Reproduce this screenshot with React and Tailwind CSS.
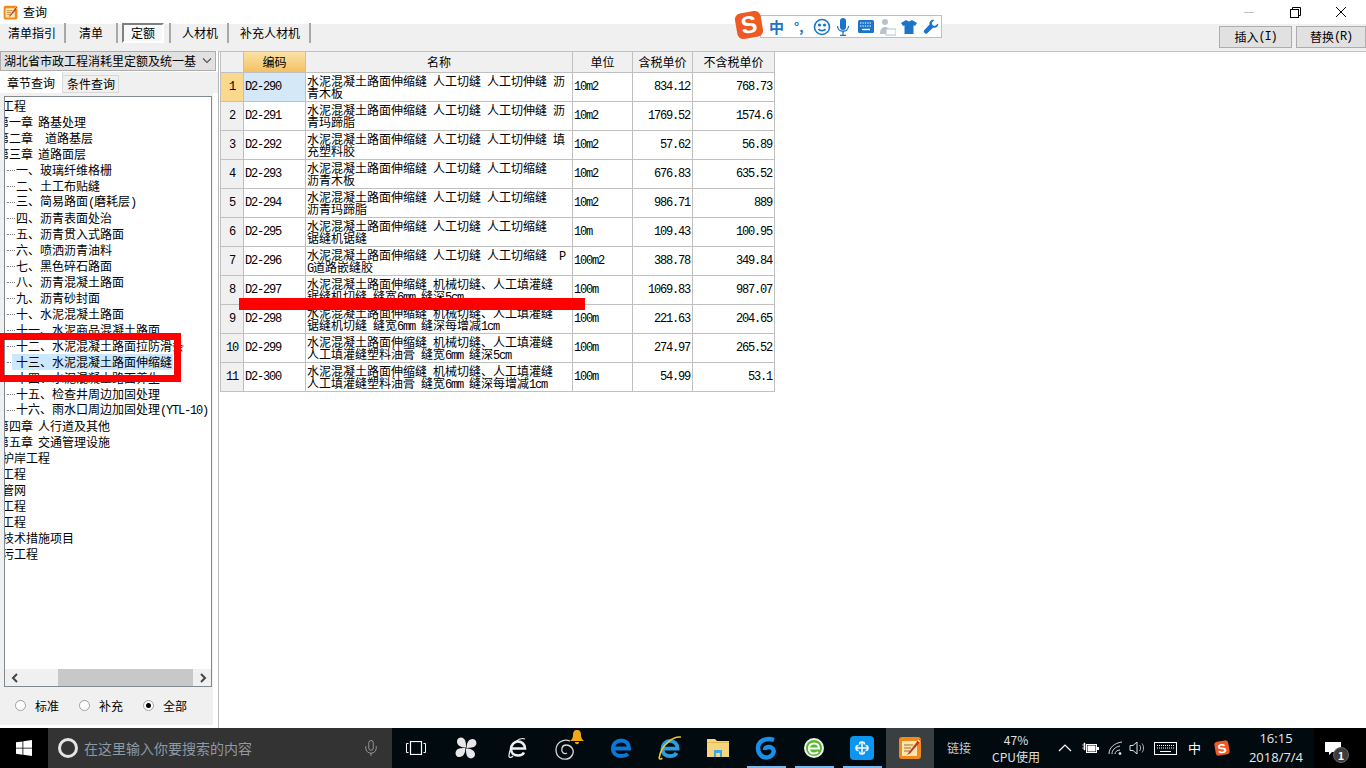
import React from "react";
import { Mic } from "lucide-react";

const CJK = "font-['Noto_Sans_CJK_SC','Noto_Sans',sans-serif]";

const tabs = [
  { label: "清单指引", w: "w-[66px]" },
  { label: "清单", w: "w-[52px]" },
  { label: "定额", w: "w-[53px]", active: true },
  { label: "人材机", w: "w-[58px] pl-[2px]" },
  { label: "补充人材机", w: "w-[82px] pl-[2px]" },
];

const tree = [
  { level: 0, text: "工程" },
  { level: 1, text: "第一章", rest: "路基处理" },
  { level: 1, text: "第二章", rest: "道路基层", wide: true },
  { level: 1, text: "第三章", rest: "道路面层" },
  { level: 2, text: "一、玻璃纤维格栅" },
  { level: 2, text: "二、土工布贴缝" },
  { level: 2, text: "三、简易路面(磨耗层)" },
  { level: 2, text: "四、沥青表面处治" },
  { level: 2, text: "五、沥青贯入式路面" },
  { level: 2, text: "六、喷洒沥青油料" },
  { level: 2, text: "七、黑色碎石路面" },
  { level: 2, text: "八、沥青混凝土路面" },
  { level: 2, text: "九、沥青砂封面" },
  { level: 2, text: "十、水泥混凝土路面" },
  { level: 2, text: "十一、水泥商品混凝土路面" },
  { level: 2, text: "十二、水泥混凝土路面拉防滑条" },
  { level: 2, text: "十三、水泥混凝土路面伸缩缝", selected: true },
  { level: 2, text: "十四、水泥混凝土路面养生" },
  { level: 2, text: "十五、检查井周边加固处理" },
  { level: 2, text: "十六、雨水口周边加固处理(YTL-10)" },
  { level: 1, text: "第四章", rest: "人行道及其他" },
  { level: 1, text: "第五章", rest: "交通管理设施" },
  { level: 0, text: "护岸工程" },
  { level: 0, text: "工程", pad: true },
  { level: 0, text: "管网" },
  { level: 0, text: "工程", pad: true },
  { level: 0, text: "工程", pad: true },
  { level: 0, text: "技术措施项目" },
  { level: 0, text: "污工程" },
];

const HAND = "水泥混凝土路面伸缩缝 人工切缝 人工切伸缝";
const HAND2 = "水泥混凝土路面伸缩缝 人工切缝 人工切缩缝";
const MACH = "水泥混凝土路面伸缩缝 机械切缝、人工填灌缝";

const rows = [
  ["D2-290", [HAND + " 沥", "青木板"], "10m2", "834.12", "768.73"],
  ["D2-291", [HAND + " 沥", "青玛蹄脂"], "10m2", "1769.52", "1574.6"],
  ["D2-292", [HAND + " 填", "充塑料胶"], "10m2", "57.62", "56.89"],
  ["D2-293", [HAND2, "沥青木板"], "10m2", "676.83", "635.52"],
  ["D2-294", [HAND2, "沥青玛蹄脂"], "10m2", "986.71", "889"],
  ["D2-295", [HAND2, "锯缝机锯缝"], "10m", "109.43", "100.95"],
  ["D2-296", [HAND2 + "  P", "G道路嵌缝胶"], "100m2", "388.78", "349.84"],
  ["D2-297", [MACH, "锯缝机切缝 缝宽6mm 缝深5cm"], "100m", "1069.83", "987.07"],
  ["D2-298", [MACH, "锯缝机切缝 缝宽6mm 缝深每增减1cm"], "100m", "221.63", "204.65"],
  ["D2-299", [MACH, "人工填灌缝塑料油膏 缝宽6mm 缝深5cm"], "100m", "274.97", "265.52"],
  ["D2-300", [MACH, "人工填灌缝塑料油膏 缝宽6mm 缝深每增减1cm"], "100m", "54.99", "53.1"],
];

// latin runs are set narrow so they take 6px a char like the original bitmap font
function Mixed({ text }) {
  return (
    <>
      {text.split(/([\x00-\x7f]+)/).map((part, i) =>
        /^[\x00-\x7f]+$/.test(part) ? (
          <span key={i} className="font-['Liberation_Mono',monospace] text-[12px] tracking-[-1.2px] whitespace-pre">
            {part}
          </span>
        ) : (
          <span key={i}>{part}</span>
        )
      )}
    </>
  );
}

function AppIcon({ size = 16 }) {
  return (
    <svg width={size} height={size} viewBox="0 0 24 24">
      <rect x="1" y="1" width="22" height="22" rx="3" fill="#f08a1d" />
      <rect x="4" y="5" width="15" height="15" rx="1" fill="#fbe6b0" />
      <path d="M6 9h9M6 12h7M6 15h6" stroke="#a86a20" strokeWidth="1" />
      <path d="M21 3L11 16l-2 3 3-1.5L23 5z" fill="#c0392b" />
      <path d="M20 4l2 2" stroke="#fff3c0" strokeWidth="1.5" />
    </svg>
  );
}

function TreeRow({ item }) {
  if (item.level === 0) {
    return (
      <div className={item.pad ? "h-4 leading-4 ml-[-15px] whitespace-nowrap" : "h-4 leading-4 ml-[-3px] whitespace-nowrap"}>
        {item.pad && <span className="invisible">市</span>}
        {item.text}
      </div>
    );
  }
  if (item.level === 1) {
    return (
      <div className="h-4 leading-4 ml-[-8px] whitespace-nowrap flex">
        <span>{item.text}</span>
        <span className={item.wide ? "ml-3" : "ml-[5px]"}>{item.rest}</span>
      </div>
    );
  }
  return (
    <div className="h-4 leading-4 flex items-center whitespace-nowrap">
      <span className="w-2 ml-[2px] mr-[1px] border-t border-dotted border-[#808080]" />
      <span className={item.selected ? "bg-[#cce8ff] pl-[4px] ml-[-4px] pr-[1px]" : ""}>
        <Mixed text={item.text} />
      </span>
    </div>
  );
}

function Radio({ label, checked }) {
  return (
    <div className="flex items-center w-16">
      <span className="w-[11px] h-[11px] rounded-full border border-[#a0a0a0] bg-white flex items-center justify-center mr-[9px]">
        {checked && <span className="w-[5px] h-[5px] rounded-full bg-black" />}
      </span>
      <span>{label}</span>
    </div>
  );
}

function LeftPanel() {
  return (
    <div className="w-[219px] shrink-0 flex flex-col border-r border-[#b8b8b8] bg-white">
      <div className="h-[20px] w-[216px] shrink-0 bg-[#e1e1e1] border border-[#adadad] flex items-center justify-between pl-[3px]">
        <span className="whitespace-nowrap">湖北省市政工程消耗里定额及统一基</span>
        <svg width="12" height="8" viewBox="0 0 12 8" fill="none" stroke="#555" strokeWidth="1.2" className="mr-[2px]">
          <path d="M2 1.5l4 4 4-4" />
        </svg>
      </div>
      <div className="h-[21px] mt-[1px] shrink-0 flex items-end bg-[#f0f0f0]">
        <div className="w-[63px] h-[21px] bg-white border-r border-[#d9d9d9] flex items-center justify-center">章节查询</div>
        <div className="w-[56px] h-[18px] pl-[1px] bg-[#f0f0f0] border border-[#d9d9d9] border-l-0 flex items-center justify-center">条件查询</div>
      </div>
      <div className="w-[214px] flex-1 mb-[3px] flex flex-col bg-[#f0f0f0] border-r border-white">
        <div className="h-[591px] mt-[3px] ml-[4px] w-[208px] border border-[#808890] bg-white flex flex-col">
          <div className="flex-1 overflow-hidden pt-[1px]">
            {tree.map((item, i) => (
              <TreeRow key={i} item={item} />
            ))}
          </div>
          <div className="h-[17px] bg-[#f0f0f0] flex items-center">
            <svg width="16" height="12" viewBox="0 0 16 12" fill="none" stroke="#444" strokeWidth="2" className="ml-[2px]">
              <path d="M10 2L6 6l4 4" />
            </svg>
            <div className="ml-[35px] w-[135px] h-full bg-[#c8c8c8]" />
            <svg width="16" height="12" viewBox="0 0 16 12" fill="none" stroke="#444" strokeWidth="2" className="ml-[2px]">
              <path d="M6 2l4 4-4 4" />
            </svg>
          </div>
        </div>
        <div className="h-[37px] flex items-center pl-[15px]">
          <Radio label="标准" />
          <Radio label="补充" />
          <Radio label="全部" checked />
        </div>
      </div>
    </div>
  );
}

const GRID = "grid grid-cols-[23px_62px_267px_60px_60px_82px] w-[554px]";
const HEAD = "flex items-center justify-center border-r border-b border-[#c0c0c0] bg-[#f0f0f0]";
const CELL = "border-r border-b border-[#c0c0c0] flex items-center overflow-hidden whitespace-nowrap";
const NUM = "font-['Liberation_Mono',monospace] text-[12px] tracking-[-1.2px]";

function PriceTable() {
  return (
    <div className="ml-[1px] border-l border-[#c0c0c0]">
      <div className={GRID + " h-[21px]"}>
        <div className={HEAD} />
        <div className="flex items-center justify-center border-r border-b border-[#c0c0c0] bg-gradient-to-b from-[#fbe2a4] to-[#f3c064]">编码</div>
        <div className={HEAD}>名称</div>
        <div className={HEAD}>单位</div>
        <div className={HEAD}>含税单价</div>
        <div className={HEAD}>不含税单价</div>
      </div>
      {rows.map((r, i) => (
        <div key={r[0]} className={GRID + " h-[29px]"}>
          <div className={(i === 0 ? "bg-[#fcd78e] " : "bg-[#f0f0f0] ") + "border-r border-b border-[#c0c0c0] flex items-center justify-center " + NUM}>
            {i + 1}
          </div>
          <div className={CELL + " pl-[1px] " + NUM + (i === 0 ? " bg-[#d5e8f8]" : "")}>{r[0]}</div>
          <div className="border-r border-b border-[#c0c0c0] pl-[1px] flex flex-col justify-center overflow-hidden whitespace-pre leading-[12px]">
            <div className="h-3 shrink-0"><Mixed text={r[1][0]} /></div>
            <div className="h-3 shrink-0"><Mixed text={r[1][1]} /></div>
          </div>
          <div className={CELL + " pl-[1px] " + NUM}>{r[2]}</div>
          <div className={CELL + " justify-end pr-[2px] " + NUM}>{r[3]}</div>
          <div className={CELL + " justify-end pr-[2px] " + NUM}>{r[4]}</div>
        </div>
      ))}
    </div>
  );
}

function SogouBar() {
  return (
    <div className="absolute left-[736px] top-[11px] flex items-center">
      <div className="z-10 w-[26px] h-[26px] rounded-[6px] bg-[#ee5a24] rotate-[-10deg] flex items-center justify-center text-white text-[24px] leading-none font-bold font-['Liberation_Sans',sans-serif]">
        S
      </div>
      <div className="ml-[-2px] mt-[4px] w-[182px] h-[23px] bg-white border border-[#a9c5de] flex items-center text-[#1c74c9]">
        <span className="ml-[8px] w-[20px] font-bold text-[15px] leading-none">中</span>
        <span className="ml-[5px] w-[18px] font-bold text-[13px] leading-none">°,</span>
        <svg width="18" height="18" viewBox="0 0 18 18" fill="none" stroke="#1c74c9" strokeWidth="1.6" className="ml-[1px]">
          <circle cx="9" cy="9" r="7.5" />
          <circle cx="6.5" cy="7" r=".8" fill="#1c74c9" />
          <circle cx="11.5" cy="7" r=".8" fill="#1c74c9" />
          <path d="M5.5 11c1.5 2.2 5.5 2.2 7 0" />
        </svg>
        <svg width="14" height="18" viewBox="0 0 14 18" fill="#1c74c9" className="ml-[5px]">
          <rect x="4" y="0" width="6" height="12" rx="3" />
          <path d="M1.5 8c0 7 11 7 11 0M7 14v3M4 17.3h6" fill="none" stroke="#1c74c9" strokeWidth="1.3" />
        </svg>
        <svg width="16" height="13" viewBox="0 0 16 13" className="ml-[8px]">
          <rect width="16" height="13" rx="1.5" fill="#1c74c9" />
          <path d="M2 3h12M2 6h12" stroke="#fff" strokeWidth="1.2" strokeDasharray="1.4 1" />
          <path d="M4 9.5h8" stroke="#fff" strokeWidth="1.4" />
        </svg>
        <svg width="17" height="18" viewBox="0 0 17 18" fill="#b8c2cc" className="ml-[5px]">
          <circle cx="6" cy="4" r="3" />
          <path d="M1 16c0-5 2-7 5-7s5 2 5 7z" />
          <rect x="7" y="11" width="10" height="6" fill="#fff" stroke="#b8c2cc" />
        </svg>
        <svg width="16" height="16" viewBox="0 0 16 16" fill="#1c74c9" className="ml-[5px]">
          <path d="M5 1l3 1.5L11 1l5 3-2 3-1.5-.8V15H3.500V6.200L2 7 0 4z" />
        </svg>
        <svg width="16" height="16" viewBox="0 0 16 16" fill="#1c74c9" className="ml-[6px]">
          <path d="M15 4.500l-3 2.500-2.500-.8-.8-2.500L11.500 1C9 .2 6 2 6.500 5.500L1 11.500c-1 1.500 1.500 4 3 3l6-5.800c3 .8 6-2 5-4.200z" />
        </svg>
      </div>
    </div>
  );
}

const appIcons = [
  {
    w: "w-[52px]",
    icon: (
      <svg width="24" height="24" viewBox="0 0 20 20" fill="#e8e8e8">
        <path d="M10 9.500C6 9.500 2.500 8 2.500 4.500 2.500 1.500 6 .5 8 2c2 1.500 2 5 2 7.500zM10.500 10C10.500 6 12 2.500 15.500 2.500c3 0 4 3.500 2.500 5.500-1.500 2-5 2-7.500 2zM10 10.500c4 0 7.500 1.500 7.500 5 0 3-3.500 4-5.500 2.500-2-1.500-2-5-2-7.500zM9.500 10C9.500 14 8 17.500 4.500 17.500c-3 0-4-3.500-2.500-5.500 1.500-2 5-2 7.500-2z" />
      </svg>
    ),
  },
  {
    w: "w-[52px]",
    icon: (
      <svg width="24" height="24" viewBox="0 0 24 24" fill="none" stroke="#f0f0f0" strokeWidth="2.6">
        <path d="M5 12.500h14c0-4-3-7-7-7s-7 3.500-7 7.500 3 6.500 7 6.500c3 0 5-1 6-3" />
        <path d="M19 3C14 1 5 6 3 19c-.5 3 2 3 4 1" strokeWidth="1.200" />
      </svg>
    ),
  },
  {
    w: "w-[52px]",
    icon: (
      <div className="relative w-7 h-7">
        <svg width="24" height="24" viewBox="0 0 24 24" fill="none" stroke="#d8d8d8" strokeWidth="1.300" className="absolute left-[-1px] top-[3px]">
          <path d="M15 4C8 1 1 6 1 13s6 10 11 9 8-7 5-11-9-4-10 0 2 7 5 5" />
        </svg>
        <svg width="14" height="15" viewBox="0 0 14 15" fill="#f0a818" className="absolute left-[14px] top-[-4px]">
          <path d="M7 0c3 0 4 2 4 5s1 4 3 6H0c2-2 3-3 3-6s1-5 4-5zM5 12h4c0 3-4 3-4 0z" />
        </svg>
      </div>
    ),
  },
  {
    w: "w-[50px]",
    icon: (
      <svg width="24" height="24" viewBox="0 0 24 24" fill="none" stroke="#0a78d4" strokeWidth="4">
        <path d="M4 12.500h16c0-5-3-8-8-8-4 0-8 3-8 8s4 7.500 8 7.500c3 0 5-.5 7-2" />
      </svg>
    ),
  },
  {
    w: "w-[48px]",
    icon: (
      <svg width="26" height="26" viewBox="0 0 24 24" fill="none">
        <path d="M5 12.500h14c0-4-3-7-7-7s-7 3.500-7 7.500 3 6.500 7 6.500c3 0 5-1 6-3" stroke="#2a9de0" strokeWidth="3.500" />
        <path d="M22 2C16 1 4 8 2 21c0 1.500 1 1.500 3 .5" stroke="#f0c428" strokeWidth="1.500" />
      </svg>
    ),
  },
  {
    w: "w-[48px]",
    icon: (
      <svg width="22" height="20" viewBox="0 0 22 20">
        <path d="M0 1h8l2 2h12v16H0z" fill="#f5d67e" />
        <rect y="4" width="22" height="1" fill="#e6b84c" />
        <rect x="7" y="12" width="8" height="7" fill="#3fa9e8" />
        <rect x="9" y="15" width="4" height="4" fill="#f5d67e" />
      </svg>
    ),
  },
  {
    w: "w-[48px]",
    bar: true,
    icon: (
      <svg width="24" height="26" viewBox="0 0 24 26" fill="none" stroke="#1a8fe8" strokeWidth="4.500">
        <path d="M20 5C12 2 4 6 4 13s6 11 11 9 6-7 3-9-7-1-7 2" />
      </svg>
    ),
  },
  {
    w: "w-[48px]",
    bar: true,
    icon: (
      <svg width="24" height="24" viewBox="0 0 24 24" fill="none">
        <circle cx="12" cy="12" r="10" fill="#f0f0f0" />
        <circle cx="12" cy="12" r="8" fill="#58b92e" />
        <path d="M7 12.500h10c0-3-2-5-5-5s-5 2-5 5 2 5 5 5c2 0 3-.5 4-1.500" stroke="#fff" strokeWidth="2" />
      </svg>
    ),
  },
  {
    w: "w-[48px]",
    bar: true,
    icon: (
      <svg width="24" height="24" viewBox="0 0 24 24" fill="none">
        <rect width="24" height="24" rx="4" fill="#0d96ef" />
        <path d="M12 6v12M7 12h10" stroke="#fff" strokeWidth="1.500" />
        <path d="M9.500 8.500a2.500 2.500 0 0 1 5 0M9.500 15.500a2.500 2.500 0 0 0 5 0M8.500 9.500a2.500 2.500 0 0 0 0 5M15.500 9.500a2.500 2.500 0 0 1 0 5" stroke="#fff" strokeWidth="1.500" />
      </svg>
    ),
  },
];

function Taskbar() {
  return (
    <div className="h-[40px] shrink-0 flex bg-[#000a0f] text-white">
      <div className="w-12 bg-black flex items-center justify-center">
        <svg width="16" height="16" viewBox="0 0 16 16" fill="#fff">
          <path d="M0 2.300l6.500-.9v6.300H0zM7.300 1.300L16 0v7.700H7.300zM0 8.400h6.500v6.300L0 13.800zM7.300 8.400H16V16l-8.700-1.200z" />
        </svg>
      </div>
      <div className="w-[344px] bg-[#333333] flex items-center pl-[10px]">
        <span className="w-[20px] h-[20px] rounded-full border-[3px] border-[#e4e4e4]" />
        <span className="ml-[6px] text-[14px] text-[#8d99a3] whitespace-nowrap">在这里输入你要搜索的内容</span>
        <Mic size={18} strokeWidth={1} className="ml-[110px] text-[#b0b0b0]" />
      </div>
      <div className="w-12 flex items-center justify-center">
        <svg width="20" height="14" viewBox="0 0 20 14" fill="none" stroke="#fff">
          <rect x="4.500" y=".5" width="11" height="13" strokeWidth="1.200" />
          <path d="M2.500 2.500H.5v9h2M17.500 2.500h2v9h-2" />
        </svg>
      </div>
      {appIcons.map((a, i) => (
        <div key={i} className={a.w + " flex items-center justify-center relative"}>
          {a.icon}
          {a.bar && <span className="absolute bottom-0 left-[5px] w-[39px] h-[2px] bg-[#76b9ed]" />}
        </div>
      ))}
      <div className="w-[48px] bg-[#3a3f42] flex items-center justify-center relative">
        <AppIcon size={24} />
      </div>
      <div className="w-[50px] flex items-center justify-center text-[12px] text-[#c8c8c8]">链接</div>
      <div className="w-[64px] flex flex-col items-center justify-center text-[12px] leading-[17px] text-[#e0e0e0]">
        <span>47%</span>
        <span>CPU使用</span>
      </div>
      <div className="w-[5px]" />
      <div className="w-[24px] flex items-center justify-center">
        <svg width="14" height="8" viewBox="0 0 14 8" fill="none" stroke="#fff" strokeWidth="1.200">
          <path d="M1 7l6-6 6 6" />
        </svg>
      </div>
      <div className="w-[26px] flex items-center justify-center">
        <svg width="17" height="12" viewBox="0 0 17 12" fill="#fff">
          <path d="M0 3h2M0 6h2M2 1v7h1V1z" stroke="#fff" strokeWidth=".6" />
          <rect x="4.500" y="2.500" width="10" height="8" fill="none" stroke="#fff" />
          <rect x="5.500" y="3.500" width="8" height="6" />
          <rect x="15" y="5" width="2" height="3" />
        </svg>
      </div>
      <div className="w-[24px] flex items-center justify-center">
        <svg width="15" height="14" viewBox="0 0 15 14" fill="none" stroke="#d8d8d8">
          <path d="M1 13C1 7 6 2 14 1M4 13c0-4 3-7 8-8M7 13c0-2 2-4 5-4" />
          <circle cx="12" cy="12.500" r="1" fill="#fff" />
        </svg>
      </div>
      <div className="w-[20px] flex items-center justify-center">
        <svg width="17" height="14" viewBox="0 0 17 14" fill="none" stroke="#e0e0e0">
          <path d="M1 4.500h3L8 1v12L4 9.500H1z" />
          <path d="M10.500 4c1.500 1.500 1.500 4.500 0 6M13 2.500c2 2.500 2 6.500 0 9" strokeWidth=".8" />
        </svg>
      </div>
      <div className="w-[36px] flex items-center justify-center">
        <svg width="23" height="13" viewBox="0 0 23 13" fill="none" stroke="#fff">
          <rect x=".5" y=".5" width="22" height="12" />
          <path d="M3 3.500h17M3 6h17" strokeDasharray="1 1" />
          <path d="M6 9.500h11" />
        </svg>
      </div>
      <div className="w-[23px] flex items-center justify-center text-[13px]">中</div>
      <div className="w-[32px] flex items-center justify-center">
        <div className="w-[14px] h-[14px] rounded-[3px] bg-[#ee5a24] rotate-[-10deg] flex items-center justify-center text-white text-[13px] leading-none font-bold font-['Liberation_Sans',sans-serif]">
          S
        </div>
      </div>
      <div className="w-[76px] flex flex-col items-center justify-center text-[13px] leading-[19px] text-[#e8e8e8] font-['Open_Sans',sans-serif]">
        <span>16:15</span>
        <span>2018/7/4</span>
      </div>
      <div className="flex-1 bg-black flex items-center justify-center relative">
        <svg width="16" height="13" viewBox="0 0 16 13" fill="#fff" className="mr-[14px]">
          <path d="M0 0h16v10H7l-3 3v-3H0z" />
        </svg>
        <span className="absolute left-[19px] top-[19px] w-[16px] h-[16px] rounded-full bg-[#3c3c3c] border border-[#666] flex items-center justify-center text-[11px] leading-none font-bold">
          1
        </span>
      </div>
    </div>
  );
}

export default function App() {
  return (
    <div className={"w-[1366px] h-[768px] relative overflow-hidden flex flex-col bg-white text-black text-[12px] " + CJK}>
      <div className="h-[24px] shrink-0 flex items-center pl-[3px] bg-white">
        <AppIcon size={15} />
        <span className="ml-[5px] text-[12px]">查询</span>
        <div className="ml-auto flex items-center">
          <span className="w-[10px] border-t border-[#c0c0c0] mr-[36px]" />
          <svg width="11" height="11" viewBox="0 0 11 11" fill="none" stroke="#000" className="mr-[34px]">
            <rect x=".5" y="2.500" width="8" height="8" />
            <path d="M2.500 2.500v-2h8v8h-2" />
          </svg>
          <svg width="12" height="12" viewBox="0 0 12 12" fill="none" stroke="#000" className="mr-[19px]">
            <path d="M1 1l10 10M11 1L1 11" />
          </svg>
        </div>
      </div>
      <div className="h-[27px] shrink-0 flex items-start bg-[#f0f0f0]">
        {tabs.map((t) => (
          <div key={t.label} className={t.w + " h-[20px] mt-[-1px] flex items-center justify-center border-r-2 border-[#a8a8a8]"}>
            {t.active ? (
              <span className="w-[42px] h-[20px] mr-[1px] border-2 border-b-white border-r-white border-t-[#808080] border-l-[#808080] bg-[#f8f8f8] flex items-center justify-center">
                {t.label}
              </span>
            ) : (
              t.label
            )}
          </div>
        ))}
        <div className="ml-auto mt-[2px] flex gap-[4px]">
          <div className="w-[73px] h-[22px] bg-[#e1e1e1] border border-[#adadad] flex items-center justify-center">
            插入<Mixed text="(I)" />
          </div>
          <div className="w-[70px] h-[22px] bg-[#e1e1e1] border border-[#adadad] flex items-center justify-center">
            替换<Mixed text="(R)" />
          </div>
        </div>
      </div>
      <div className="flex-1 flex min-h-0">
        <LeftPanel />
        <div className="flex-1 bg-white border-t border-[#c0c0c0]">
          <PriceTable />
        </div>
      </div>
      <Taskbar />

      <SogouBar />
      {/* red marks drawn over the screenshot */}
      <div className="absolute left-0 top-[333px] w-[181px] h-[49px] border-[7px] border-l-4 border-[#ff0000]" />
      <div className="absolute left-[239px] top-[298px] w-[346px] h-[12px] bg-[#ff0000]" />
    </div>
  );
}
